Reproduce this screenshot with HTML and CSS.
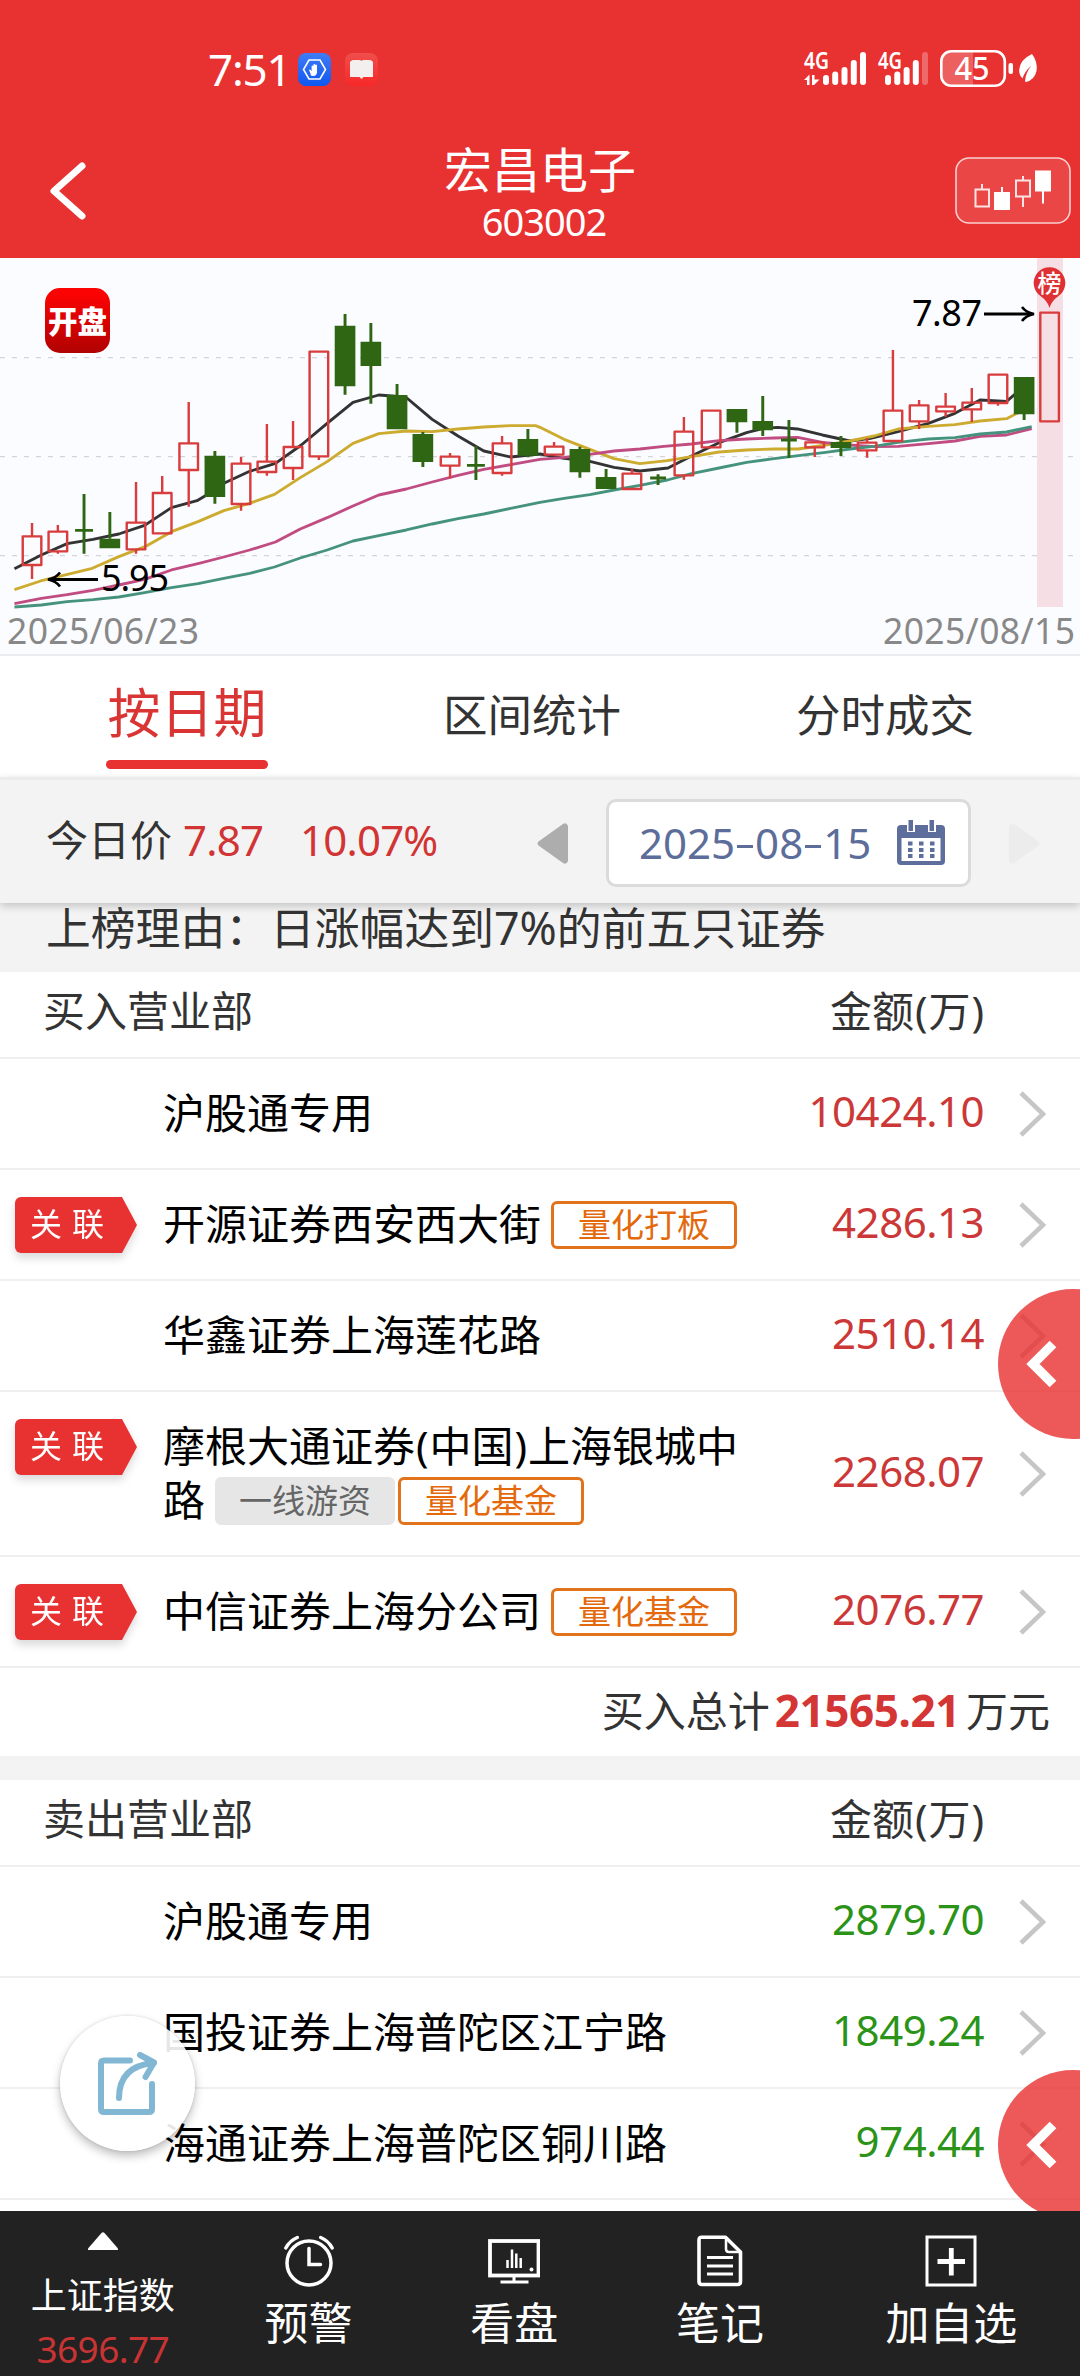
FILE: index.html
```html
<!DOCTYPE html>
<html lang="zh-CN">
<head>
<meta charset="utf-8">
<title>宏昌电子 603002</title>
<link rel="stylesheet" href="styles.css">
</head>
<body>
<div class="screen">
  <header class="header">
    <div class="status">
      <div class="status-left">
        <span class="clock">7:51</span>
        <svg class="app-icon" width="33" height="33" viewBox="0 0 33 33">
          <defs><linearGradient id="blue" x1="0" y1="0" x2="0" y2="1"><stop offset="0" stop-color="#3f7cf5"/><stop offset="1" stop-color="#0f57f2"/></linearGradient></defs>
          <rect width="33" height="33" rx="8" fill="url(#blue)"/>
          <path d="M11 7h11l5.500 9.500-5.500 9.500H11l-5.500-9.500z" fill="none" stroke="#fff" stroke-width="1.600"/>
          <path d="M13 21.500l-2-4.500q1-1 2 .6l.6.6V13q.9-1 1.800 0v3-4.500q.9-1 1.800 0V16v-4q.9-1 1.800 0v8q-1 3-3.500 3t-3.500-1.500z" fill="#fff"/>
        </svg>
        <svg class="app-icon" width="33" height="33" viewBox="0 0 33 33">
          <defs><linearGradient id="red" x1="0" y1="0" x2="0" y2="1"><stop offset="0" stop-color="#f04e4c"/><stop offset="1" stop-color="#f82828"/></linearGradient></defs>
          <rect width="33" height="33" rx="8" fill="url(#red)"/>
          <path d="M5 9q1-1.500 3-2h6q2 0 2.500 1Q17 7 19 7h6q2 .5 3 2v15H18.500l-2 2-2-2H5z" fill="#f3efee"/>
        </svg>
      </div>
      <svg class="status-right" width="236" height="60" viewBox="802 39 236 60">
        <g fill="#fff">
          <text x="804" y="69" font-size="23" font-weight="600" textLength="25" lengthAdjust="spacingAndGlyphs">4G</text>
          <text x="878" y="69" font-size="23" font-weight="600" textLength="24" lengthAdjust="spacingAndGlyphs">4G</text>
          <path d="M804 80l5.500-5.500V85H807v-5zM812 75h2.500v4.500h5L814 85h-2z"/>
        </g>
        <g stroke="#fff" stroke-width="6" stroke-linecap="round">
          <path d="M826 78v4M835.200 74.500V82M844.500 70v12M853.800 63v19M863 55v27M888 78v4M897.300 74.500V82M906.600 70v12M915.800 63v19"/>
          <path d="M925 55v27" opacity=".28"/>
        </g>
        <path d="M951 52h22v33h-22q-9 0-9-9V61q0-9 9-9z" fill="#fff" opacity=".23"/>
        <rect x="941.300" y="51.300" width="63.500" height="34.500" rx="10" fill="none" stroke="#fff" stroke-width="2.600"/>
        <rect x="1008.500" y="63" width="4.500" height="11" rx="2" fill="#fff"/>
        <text x="954.500" y="80" font-size="32" font-weight="500" fill="#fff" textLength="35" lengthAdjust="spacingAndGlyphs">45</text>
        <path d="M1032 54q6 8 4.500 17-2 9-10.500 11l-1-.5q.5-9 6.500-16-7 6-9 13-5-5-2.500-12.500Q1022 59 1032 54z" fill="#fff"/>
      </svg>
    </div>
    <div class="nav">
      <svg class="back" width="42" height="62" viewBox="0 0 42 62"><path d="M36 6L8 31l28 25" fill="none" stroke="#fff" stroke-width="7" stroke-linecap="round" stroke-linejoin="round"/></svg>
      <div class="title">
        <div class="name">宏昌电子</div>
        <div class="code">603002</div>
      </div>
      <svg class="kline-button" width="116" height="67" viewBox="955 157 116 67">
        <rect x="956" y="158" width="114" height="65" rx="13" fill="#fff" fill-opacity=".1" stroke="#fbd0d0" stroke-width="1.600"/>
        <path d="M975.500 189.500h13.500v17h-13.500zM982 189v-5M1016 180.500h14v16h-14zM1023 180v-4M1023 197v10" fill="none" stroke="#fde3e3" stroke-width="2"/>
        <path d="M994 192h16v18h-16zM1001 187h2v6h-2zM1035 170.500h16v21h-16zM1042 191h2v12.500h-2z" fill="#fff"/>
      </svg>
    </div>
  </header>

  <svg class="chart" width="1080" height="396" viewBox="0 258 1080 396">
    <defs><linearGradient id="logo" x1="0" y1="0" x2="0" y2="1"><stop offset=".1" stop-color="#fb0303"/><stop offset="1" stop-color="#b00202"/></linearGradient></defs>
    <path d="M0 357.700H1080M0 456.700H1080M0 555.700H1080" stroke="#cbcbd0" stroke-width="1" stroke-dasharray="5 7" fill="none"/>
    <rect x="1037" y="258" width="26" height="349" fill="#f6dfe4"/>
    <g transform="translate(0 250) scale(.34436 .33333)" fill="none">
      <g stroke-width="8.500" stroke-linejoin="round">
        <polyline class="ma5" points="42,956 120,915 195,881 270,868 345,852 420,826 498,773 572,752 600,735 650,700 725,664 800,640 875,585 950,520 1025,457 1100,435 1178,441 1255,508 1330,558 1405,603 1483,621 1568,612 1638,625 1713,634 1783,652 1858,663 1940,654 2008,618 2088,578 2168,548 2218,535 2258,532 2316,537 2388,555 2468,573 2528,565 2608,545 2696,520 2773,490 2846,450 2923,454 2968,415"/>
        <polyline class="ma10" points="42,1019 118,993 190,975 268,955 345,920 425,888 498,845 575,815 650,782 725,760 797,733 872,683 950,635 1025,580 1100,551 1180,543 1255,545 1330,537 1405,531 1483,527 1555,527 1568,532 1638,568 1713,598 1783,626 1858,641 1938,632 2008,620 2088,606 2168,600 2248,597 2318,597 2398,585 2468,573 2538,558 2608,537 2696,529 2773,524 2846,513 2923,506 2968,482"/>
        <polyline class="ma20" points="42,1061 120,1045 195,1034 270,1021 345,1005 420,988 498,960 575,941 650,921 725,900 800,876 872,837 950,803 1025,768 1100,735 1180,717 1255,696 1330,676 1405,658 1483,644 1568,628 1638,622 1713,613 1783,603 1858,597 1928,589 2008,582 2088,572 2168,567 2248,564 2316,562 2388,577 2468,585 2538,590 2608,589 2696,581 2773,573 2846,559 2923,555 2996,536"/>
        <polyline class="ma30" points="42,1071 120,1065 195,1055 270,1049 345,1041 420,1028 498,1013 575,1001 650,985 725,970 797,951 872,924 950,900 1025,873 1100,857 1180,840 1255,822 1330,806 1405,792 1483,775 1568,757 1638,745 1713,734 1783,720 1858,706 1938,690 2008,671 2088,654 2168,637 2248,626 2318,617 2398,607 2468,597 2538,589 2608,577 2696,567 2773,563 2846,552 2923,546 2996,530"/>
      </g>
      <g class="up" stroke-width="7" stroke-linejoin="round">
        <path d="M66 859h54v86h-54zM141 845h54v59h-54zM368 818h54v80h-54zM444 729h54v121h-54zM521 580h54v80h-54zM673 641h54v121h-54zM748 635h54v31h-54zM824 591h54v63h-54zM899 305h54v314h-54zM1280 620h54v27h-54zM1431 580h54v89h-54z"/>
        <path d="M1582 590h54v24h-54zM1808 671h54v46h-54zM1959 545h54v131h-54zM2038 482h54v110h-54zM2339 577h54v15h-54zM2491 578h54v23h-54zM2566 482h54v91h-54zM2642 466h54v48h-54zM2719 470h54v14h-54zM2795 458h54v20h-54zM2871 374h54v85h-54zM3021 188h54v326h-54z"/>
        <path d="M93 819v40M93 945v42M168 825v20M168 904v7M395 696v122M395 898v13M471 678v51M548 456v124M548 660v110M700 621v20M700 762v20M775 522v113M775 666v11M851 513v78M851 654v36M926 619v11M1307 609v11M1307 647v38M1458 558v22M1458 669v8"/>
        <path d="M1609 576v14M1835 657v14M1986 501v44M1986 676v13M2366 592v29M2518 564v14M2518 601v22M2593 300v182M2669 450v16M2669 514v23M2746 429v40M2746 484v16M2822 414v44M2822 478v38M2898 459v8"/>
      </g>
      <g class="down">
        <path stroke="none" d="M289 866h60v29h-60zM594 617h60v124h-60zM972 227h60v182h-60zM1047 275h60v73h-60zM1123 435h60v103h-60zM1198 552h60v84h-60zM1503 567h60v50h-60zM1654 597h60v70h-60zM1730 681h60v36h-60zM2110 477h60v40h-60zM2185 513h60v28h-60zM2412 576h60v18h-60zM2944 381h60v112h-60z"/>
        <path fill="none" stroke-width="8.500" d="M244 732v179M319 786v80M624 603v158M1002 192v242M1077 219v242M1153 402v40M1228 546v105M1382 588v102M1533 537v85M1684 590v93M1760 657v30M1911 673v32M2140 516v32M2215 438v120M2291 510v114M2442 558v60M2974 490v20M218 841h52M1356 646h52M1888 684h46M2268 570h46"/>
      </g>
    </g>
    <rect x="45" y="288" width="65" height="65" rx="15" fill="url(#logo)"/>
    <text class="logo-text" x="48" y="333" textLength="59" lengthAdjust="spacingAndGlyphs">开盘</text>
    <path d="M1049.500 308q-2-7-9-12a15.800 15.800 0 1 1 18 0q-7 5-9 12z" fill="#df3033"/>
    <text class="pin-text" x="1049.500" y="292" text-anchor="middle">榜</text>
    <g fill="none" stroke="#000" stroke-width="3.200"><path d="M51 579.500h47M984 314h47"/><path d="M60 572.500q-4 5.500-12 7 8 1.500 12 7M1022 307q4 5.500 12 7-8 1.500-12 7" stroke-width="2.600"/></g>
    <text class="price" x="101" y="590.500" textLength="68">5.95</text>
    <text class="price" x="912" y="325.500" textLength="70">7.87</text>
    <text class="date" x="7" y="643.500" textLength="192">2025/06/23</text>
    <text class="date" x="883" y="643.500" textLength="192">2025/08/15</text>
  </svg>

  <nav class="tabs">
    <div class="tab active">按日期</div>
    <div class="tab">区间统计</div>
    <div class="tab">分时成交</div>
  </nav>

  <section class="filter">
    <div class="today"><span>今日价</span><span class="last">7.87</span><span class="pct">10.07%</span></div>
    <svg class="prev" width="31" height="41" viewBox="0 0 31 41"><path d="M31 3v35q-1.500 4-5 2L1.500 22.500q-2-2 0-4L26 1q3.500-2 5 2z" fill="#adadad"/></svg>
    <div class="date-box">
      <span>2025<i></i>08<i></i>15</span>
      <svg width="48" height="45" viewBox="0 0 48 45">
        <path d="M4 5h6v7h8V5h13v7h8V5h5q4 0 4 4v32q0 4-4 4H4q-4 0-4-4V9q0-4 4-4zM4.500 18v23h39V18z" fill="#5d6e9c" fill-rule="evenodd"/>
        <path d="M11.500 0h4.500v11h-4.500zM32.500 0H37v11h-4.500zM11 21.500h4.500v4H11zM22 21.500h4.500v4H22zM33 21.500h4.500v4H33zM11 28h4.500v4H11zM22 28h4.500v4H22zM33 28h4.500v4H33zM11 34h4.500v4H11zM22 34h4.500v4H22zM33 34h4.500v4H33z" fill="#5d6e9c"/>
      </svg>
    </div>
    <svg class="next" width="31" height="41" viewBox="0 0 31 41"><path d="M0 3v35q1.500 4 5 2l24.500-17.500q2-2 0-4L5 1Q1.500-1 0 3z" fill="#ececec"/></svg>
  </section>

  <div class="reason">上榜理由：日涨幅达到7%的前五只证券</div>

  <div class="row-head"><span>买入营业部</span><span>金额<span class="paren">(</span>万<span class="paren">)</span></span></div>
  <div class="row"><div class="mark"></div><div class="broker">沪股通专用</div><div class="amount buy">10424.10</div><svg class="arrow" viewBox="0 0 28 46"><path d="M2 2l22 21L2 44"/></svg></div>
  <div class="row"><div class="mark"><span class="linked">关联</span></div><div class="broker">开源证券西安西大街<span class="tag first">量化打板</span></div><div class="amount buy">4286.13</div><svg class="arrow" viewBox="0 0 28 46"><path d="M2 2l22 21L2 44"/></svg></div>
  <div class="row"><div class="mark"></div><div class="broker">华鑫证券上海莲花路</div><div class="amount buy">2510.14</div><svg class="arrow" viewBox="0 0 28 46"><path d="M2 2l22 21L2 44"/></svg></div>
  <div class="row tall"><div class="mark"><span class="linked">关联</span></div><div class="broker">摩根大通证券<span class="paren">(</span>中国<span class="paren">)</span>上海银城中<br>路<span class="tag gray first">一线游资</span><span class="tag">量化基金</span></div><div class="amount buy">2268.07</div><svg class="arrow" viewBox="0 0 28 46"><path d="M2 2l22 21L2 44"/></svg></div>
  <div class="row"><div class="mark"><span class="linked">关联</span></div><div class="broker">中信证券上海分公司<span class="tag first">量化基金</span></div><div class="amount buy">2076.77</div><svg class="arrow" viewBox="0 0 28 46"><path d="M2 2l22 21L2 44"/></svg></div>
  <div class="total"><span>买入总计</span><b>21565.21</b><span>万元</span></div>
  <div class="gap"></div>
  <div class="row-head"><span>卖出营业部</span><span>金额<span class="paren">(</span>万<span class="paren">)</span></span></div>
  <div class="row"><div class="mark"></div><div class="broker">沪股通专用</div><div class="amount sell">2879.70</div><svg class="arrow" viewBox="0 0 28 46"><path d="M2 2l22 21L2 44"/></svg></div>
  <div class="row"><div class="mark"></div><div class="broker">国投证券上海普陀区江宁路</div><div class="amount sell">1849.24</div><svg class="arrow" viewBox="0 0 28 46"><path d="M2 2l22 21L2 44"/></svg></div>
  <div class="row"><div class="mark"></div><div class="broker">海通证券上海普陀区铜川路</div><div class="amount sell">974.44</div><svg class="arrow" viewBox="0 0 28 46"><path d="M2 2l22 21L2 44"/></svg></div>

  <div class="side side-top"><svg width="34" height="50" viewBox="0 0 34 50"><path d="M28 5L8 25l20 20" fill="none" stroke="#fff" stroke-width="9.500"/></svg></div>
  <div class="side side-bottom"><svg width="34" height="50" viewBox="0 0 34 50"><path d="M28 5L8 25l20 20" fill="none" stroke="#fff" stroke-width="9.500"/></svg></div>
  <div class="share">
    <svg width="60" height="64" viewBox="97 2051 60 64" fill="none" stroke="#82b7d4" stroke-width="6" stroke-linecap="round" stroke-linejoin="round">
      <path d="M130 2060.500h-26q-3 0-3 3v45.500q0 3 3 3h45q3 0 3-3v-25M119 2098q0-32 35-35M140 2055l14 7.500-8.500 14.500"/>
    </svg>
  </div>

  <footer class="bottom">
    <div class="index">
      <svg width="30" height="18" viewBox="0 0 30 18"><path d="M13.500 1q1.500-1.500 3 0L30 16.500V18H0v-1.500z" fill="#fff"/></svg>
      <div class="index-name">上证指数</div>
      <div class="index-value">3696.77</div>
    </div>
    <div class="item">
      <svg width="52" height="52" viewBox="0 0 52 52" fill="none" stroke="#fff" stroke-width="3.500" stroke-linecap="round"><circle cx="26" cy="28" r="22"/><path d="M26 13.500v16h11.500M2.800 13q4-7.500 11.500-10.500M49.200 13q-4-7.500-11.500-10.500"/></svg>
      <span>预警</span>
    </div>
    <div class="item">
      <svg width="52" height="52" viewBox="0 0 52 52" fill="none" stroke="#fff"><rect x="2" y="6" width="48.500" height="34.500" stroke-width="3.800"/><path d="M26 40v7M12.500 47h28" stroke-width="3"/><path d="M19.500 25v8M24 14.500V33M28.300 18.500V33M32.700 23v10" stroke-width="2.500"/><circle cx="43.500" cy="34.500" r="2" fill="#fff" stroke="none"/></svg>
      <span>看盘</span>
    </div>
    <div class="item">
      <svg width="52" height="52" viewBox="0 0 52 52" fill="none" stroke="#fff" stroke-width="3.600" stroke-linejoin="round"><path d="M7 2.300h24.500L46.500 17v29.500q0 3-3 3H8q-3 0-3-3V5.300q0-3 2-3z"/><path d="M32 3v11q0 3 3 3h11" stroke-width="2.500"/><path d="M13 22.500h26M13 31h26M13 39h26" stroke-width="2.800"/></svg>
      <span>笔记</span>
    </div>
    <div class="item">
      <svg width="52" height="52" viewBox="0 0 52 52" fill="none" stroke="#fff"><rect x="2" y="2" width="48" height="48" stroke-width="3"/><path d="M12.500 26.500h27.500M26.300 13v27.500" stroke-width="4.800"/></svg>
      <span>加自选</span>
    </div>
  </footer>
</div>
</body>
</html>
```

FILE: styles.css
```css
* { box-sizing: border-box; }
body {
  margin: 0;
  background: #fff;
  color: #333;
  font-family: "Noto Sans", "Noto Sans CJK SC", sans-serif;
}
svg { display: block; flex: none; }
.screen {
  position: relative;
  display: flex;
  flex-direction: column;
  width: 1080px;
  height: 2376px;
  overflow: hidden;
  background: #fff;
  white-space: nowrap;
}
.screen > * { flex: none; }

.header { height: 258px; background: #e83131; color: #fff; }
.status {
  display: flex;
  justify-content: space-between;
  align-items: flex-start;
  height: 138px;
  padding: 39px 42px 0 208px;
}
.status-left { display: flex; height: 61px; align-items: center; gap: 14px; }
.clock { width: 76px; font-size: 44px; line-height: 40px; letter-spacing: -1.2px; padding-bottom: 2px; }
.nav { display: grid; grid-template-columns: 200px 1fr 200px; height: 120px; }
.back { margin: 22px 0 0 46px; }
.title { text-align: center; }
.name { font-size: 48px; line-height: 63px; }
.code { margin-left: 8px; font-size: 38px; line-height: 40px; letter-spacing: -1px; }
.kline-button { margin: 19px 0 0 75px; }

.chart { background: #fbfcff; }
.ma5 { stroke: #333; }
.ma10 { stroke: #ccab2e; }
.ma20 { stroke: #c04c82; }
.ma30 { stroke: #46937d; }
.up { stroke: #d83c3c; }
.down { fill: #2f6614; stroke: #2f6614; }
.logo-text { font-size: 31px; font-weight: 900; fill: #fff; }
.pin-text { font-size: 24px; font-weight: 500; fill: #fff; }
.price { font-size: 36px; fill: #000; }
.date { font-size: 35.5px; fill: #888; }

.tabs {
  display: flex;
  justify-content: space-between;
  height: 123px;
  padding: 0 106px;
  border-top: 2px solid #ececee;
}
.tab { font-size: 44.5px; line-height: 117px; }
.tab.active {
  position: relative;
  width: 162px;
  height: 113px;
  color: #d93535;
  font-size: 53px;
  line-height: 114px;
  text-align: center;
}
.tab.active::after {
  content: "";
  position: absolute;
  left: 0;
  right: 0;
  bottom: 0;
  height: 9px;
  border-radius: 4.5px;
  background: #e83131;
}

.filter {
  z-index: 1;
  display: flex;
  align-items: flex-start;
  height: 126px;
  padding: 22px 40px 0 46px;
  border-top: 3px solid #ececec;
  background: #f3f3f3;
  box-shadow: 0 3px 8px rgba(0, 0, 0, .2);
}
.today { display: flex; width: 491px; font-size: 42px; line-height: 76px; }
.last, .pct { color: #d23434; letter-spacing: -.8px; }
.last { margin-left: 11px; width: 117px; }
.prev, .next { margin-top: 21px; }
.date-box {
  display: flex;
  justify-content: space-between;
  width: 365px;
  height: 88px;
  margin: -3px 38px 0;
  padding: 18px 23px 0 30px;
  border: 3px solid #dbdbdb;
  border-radius: 10px;
  background: #fff;
  color: #5c6d9a;
  font-size: 42px;
  line-height: 45px;
}
.date-box i {
  display: inline-block;
  width: 16px;
  height: 3px;
  margin: 0 2px;
  background: currentColor;
  vertical-align: 11px;
}

.reason {
  height: 69px;
  padding-left: 46px;
  background: #f3f3f3;
  font-size: 44.8px;
  line-height: 49px;
}

.row-head {
  display: flex;
  justify-content: space-between;
  height: 87px;
  padding: 0 95px 0 43px;
  border-bottom: 2px solid #efefef;
  font-size: 42px;
  line-height: 77px;
}
.row {
  display: grid;
  grid-template-columns: 163px minmax(0, 1fr) 220px 96px;
  height: 111px;
  border-bottom: 2px solid #efefef;
}
.row.tall { height: 165px; }
.mark { padding: 27px 0 0 15px; }
.linked {
  display: block;
  width: 122px;
  height: 56px;
  padding-left: 15px;
  background: #e83131;
  border-radius: 6px 0 0 6px;
  clip-path: polygon(0 0, 107px 0, 122px 50%, 107px 100%, 0 100%);
  color: #fff;
  font-size: 32px;
  line-height: 53px;
  letter-spacing: 10px;
}
.mark:has(.linked) { filter: drop-shadow(0 5px 4px rgba(0, 0, 0, .15)); }
.broker { padding-top: 27px; color: #000; font-size: 42px; line-height: 54px; }
.paren { display: inline-block; width: 14.5px; text-align: center; }
.tag {
  display: inline-block;
  height: 48px;
  margin: -4px 0 0 3px;
  padding: 0 24px;
  border: 3px solid #e0731c;
  border-radius: 6px;
  color: #e3690c;
  font-size: 33px;
  line-height: 41px;
  vertical-align: 3px;
}
.tag.first { margin-left: 10px; }
.tag.gray { border-color: #e6e6e6; background: #e6e6e6; color: #666; padding: 0 21px; }
.amount { align-self: center; padding: 0 0 6px; font-size: 42px; line-height: 54px; letter-spacing: -.5px; text-align: right; }
.buy { color: #cc3838; }
.sell { color: #2b9418; }
.arrow { align-self: center; width: 28px; height: 46px; margin-left: 35px; fill: none; stroke: #c6c6c6; stroke-width: 4.5; }

.total {
  display: flex;
  justify-content: flex-end;
  height: 88px;
  padding-right: 30px;
  font-size: 42px;
  line-height: 85px;
}
.total b { margin: 0 6px 0 5px; color: #d43535; font-size: 44px; letter-spacing: -.4px; }
.gap { height: 24px; background: #f3f3f3; }

.side {
  position: absolute;
  left: 998px;
  width: 150px;
  height: 150px;
  padding: 50px 0 0 27px;
  border-radius: 50%;
  background: rgba(232, 48, 48, .8);
}
.side-top { top: 1289px; }
.side-bottom { top: 2070px; }
.share {
  position: absolute;
  left: 60px;
  top: 2016px;
  width: 135px;
  height: 135px;
  padding: 35px 0 0 37px;
  border-radius: 50%;
  background: rgba(255, 255, 255, .9);
  box-shadow: 0 5px 10px rgba(0, 0, 0, .25), 0 0 3px rgba(0, 0, 0, .15);
}
.bottom {
  position: absolute;
  left: 0;
  bottom: 0;
  display: grid;
  grid-template-columns: repeat(4, 205.7px) 1fr;
  width: 1080px;
  height: 165px;
  background: #222;
  color: #fff;
}
.index, .item { display: flex; flex-direction: column; align-items: center; }
.index { padding-top: 21px; }
.index-name { margin-top: 18px; font-size: 36px; line-height: 56px; }
.index-value { margin-top: 2px; color: #c83434; font-size: 37px; line-height: 46px; letter-spacing: -.6px; }
.item { padding-top: 24px; font-size: 44px; line-height: 72px; }
```
